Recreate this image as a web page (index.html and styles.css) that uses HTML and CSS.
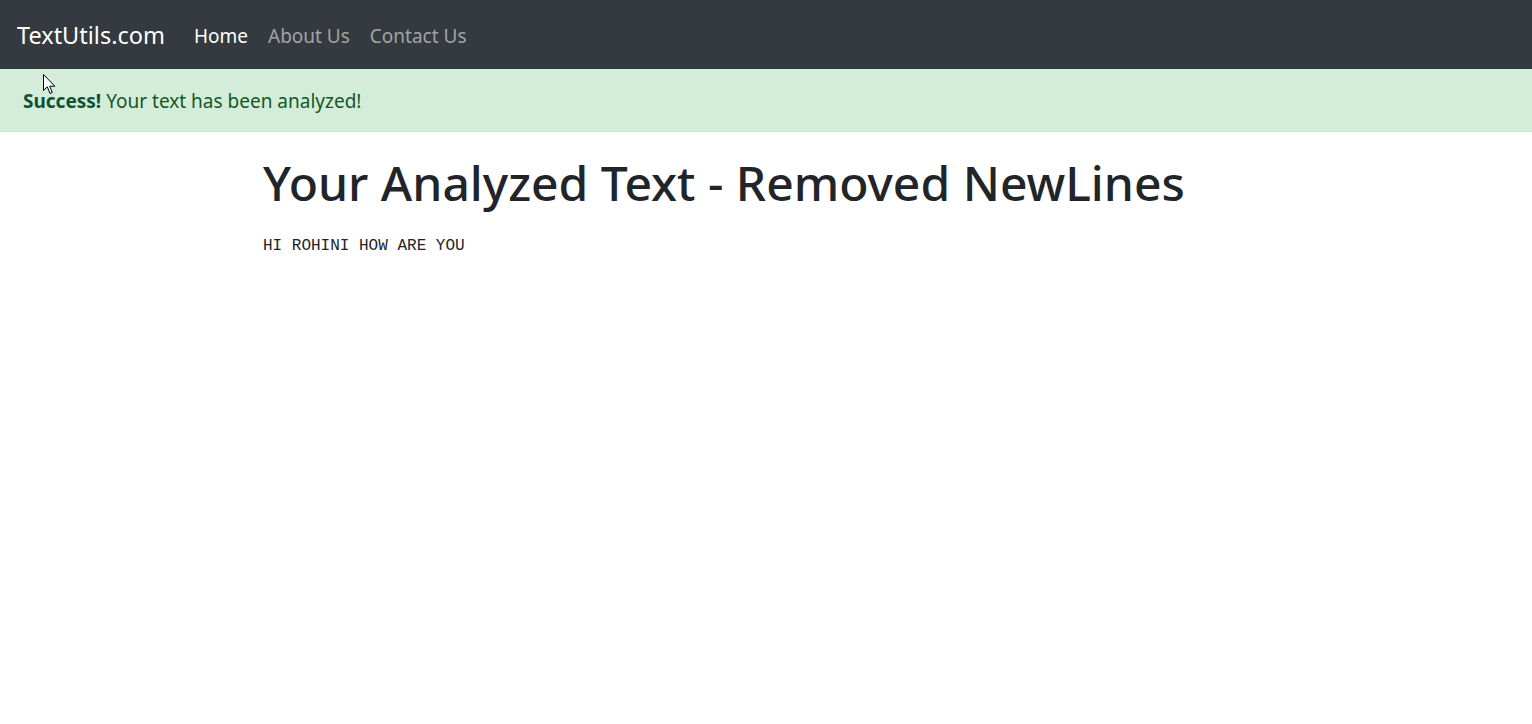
FILE: index.html
```html
<!DOCTYPE html>
<html lang="en">
<head>
<meta charset="utf-8">
<title>TextUtils - Analyzed</title>
<link rel="stylesheet" href="styles.css">
</head>
<body>
<nav class="navbar">
  <a class="brand" href="#">TextUtils.com</a>
  <ul class="nav">
    <li><a class="nav-link active" href="#">Home</a></li>
    <li><a class="nav-link" href="#">About Us</a></li>
    <li><a class="nav-link" href="#">Contact Us</a></li>
  </ul>
</nav>
<div class="alert"><strong>Success!</strong> Your text has been analyzed!</div>
<main class="container">
  <h1 class="title">Your Analyzed Text - Removed NewLines</h1>
  <p class="result">HI ROHINI HOW ARE YOU</p>
</main>
<svg class="cursor" width="13" height="21" viewBox="0 0 13 21"><path d="M0.5 0.5 L0.5 16.5 L4.3 12.8 L7 19.5 L9.3 18.5 L6.7 12.2 L11.8 12.2 Z" fill="#fff" stroke="#000" stroke-width="1"/></svg>
</body>
</html>
```
FILE: styles.css
```css
* { box-sizing: border-box; }
html, body { margin: 0; padding: 0; }
body {
  font-family: "Noto Sans", "Open Sans", sans-serif;
  font-size: 20px;
  line-height: 1.5;
  color: #212529;
  background: #fff;
  position: relative;
  min-height: 724px;
}
.navbar {
  background: #343a40;
  height: 69px;
  display: flex;
  align-items: center;
  padding: 3px 15px 0;
}
.brand {
  color: #fff;
  text-decoration: none;
  font-size: 23.5px;
  line-height: 1.5;
  margin-right: 19px;
  padding-left: 2px;
}
.nav {
  list-style: none;
  display: flex;
  margin: 0;
  padding: 0;
}
.nav-link {
  display: block;
  padding: 0 10px;
  color: rgba(255,255,255,0.55);
  text-decoration: none;
  font-size: 19px;
}
.nav-link.active { color: #fff; }
.alert {
  background: #d4edda;
  color: #155724;
  border-bottom: 1px solid #c3e6cb;
  height: 63px;
  padding: 2px 23px 0;
  display: flex;
  align-items: center;
  font-size: 19px;
}
.alert strong { font-weight: 700; color: #0f5132; margin-right: 5px; }
.container {
  width: 1006px;
  margin: 0 auto;
  padding-top: 22px;
}
.title {
  margin: 0;
  font-size: 48px;
  font-weight: 500;
  line-height: 1.2;
}
.result {
  margin: 22px 0 0;
  font-family: "Liberation Mono", "DejaVu Sans Mono", monospace;
  font-size: 16px;
  line-height: 1.5;
}
.cursor { position: absolute; left: 43px; top: 74px; }
```
